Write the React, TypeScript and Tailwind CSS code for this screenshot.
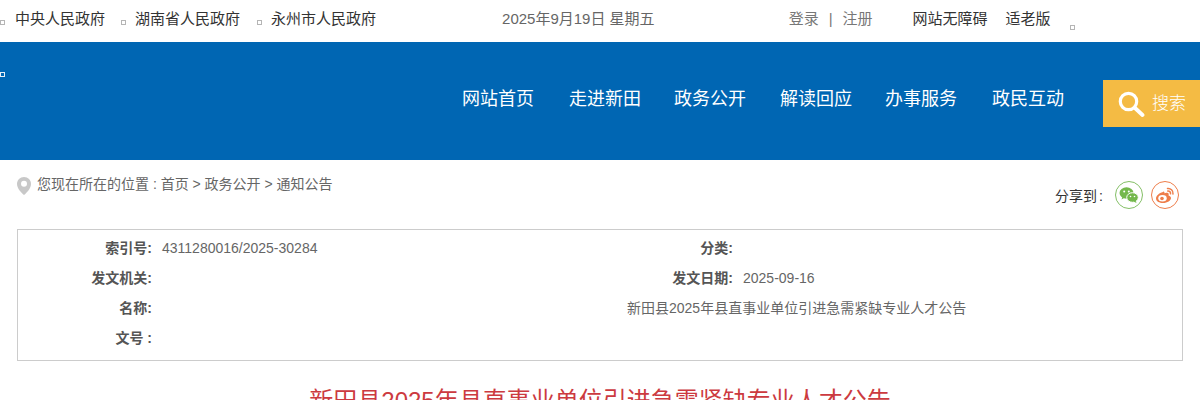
const font = '"Liberation Sans","Noto Sans CJK SC",sans-serif';

function Sq({ className = "bg-white" }: { className?: string }) {
  return <span className={"block w-[5px] h-[5px] border border-[#b5b5b5] shrink-0 " + className} />;
}

function Row({ label, value, label2, value2 }: { label: string; value?: string; label2?: string; value2?: string }) {
  return (
    <div className="flex h-[30px] items-center text-[14px] leading-[30px]">
      <div className="w-[134px] text-right font-bold text-[#555]">{label}</div>
      <div className="w-[476px] pl-[10px] text-[#666]">{value}</div>
      <div className="w-[105px] text-right font-bold text-[#555]">{label2}</div>
      <div className="flex-1 pl-[10px] text-[#666]">{value2}</div>
    </div>
  );
}

export default function App() {
  return (
    <div className="w-[1200px] h-[400px] overflow-hidden bg-white" style={{ fontFamily: font }}>
      {/* top bar */}
      <div className="h-[42px] flex items-start text-[15px] leading-[38px] text-[#333]">
        <Sq className="mt-[20px]" />
        <span className="ml-[10px]">中央人民政府</span>
        <Sq className="mt-[20px] ml-[16px]" />
        <span className="ml-[9px]">湖南省人民政府</span>
        <Sq className="mt-[20px] ml-[17px]" />
        <span className="ml-[9px]">永州市人民政府</span>
        <span className="ml-[126px] text-[#666]">2025年9月19日 星期五</span>
        <span className="ml-[134px] text-[#777]">登录</span>
        <span className="ml-[10px] text-[#777]">|</span>
        <span className="ml-[10px] text-[#777]">注册</span>
        <span className="ml-[40px]">网站无障碍</span>
        <span className="ml-[18px]">适老版</span>
        <Sq className="mt-[25px] ml-[19px]" />
      </div>
      {/* header */}
      <div className="h-[118px] bg-[#0066b3] flex items-start relative">
        <span className="block w-[5px] h-[5px] mt-[30px] border border-[#e6eef6] shrink-0" />
        <nav className="flex ml-[457px] mt-[43px] text-[18px] leading-[28px] text-white">
          <span>网站首页</span>
          <span className="ml-[35px]">走进新田</span>
          <span className="ml-[33px]">政务公开</span>
          <span className="ml-[34px]">解读回应</span>
          <span className="ml-[33px]">办事服务</span>
          <span className="ml-[35px]">政民互动</span>
        </nav>
        <div className="ml-auto mt-[38px] w-[97px] h-[47px] bg-[#f4bb44] flex items-center text-white text-[17px]">
          <svg className="ml-[14px]" width="28" height="28" viewBox="0 0 28 28" fill="none" stroke="#fff" strokeLinecap="round">
            <circle cx="11.5" cy="11.5" r="8.2" strokeWidth="3.2" />
            <path d="M18 18l7.5 7" strokeWidth="3.8" />
          </svg>
          <span className="ml-[7px] font-light">搜索</span>
        </div>
      </div>
      {/* breadcrumb */}
      <div className="h-[69px] flex items-start">
        <svg className="ml-[17px] mt-[17px]" width="14" height="18" viewBox="0 0 14 18">
          <path d="M7 0C3 0 0 3 0 7c0 4.5 4.5 9 7 11 2.500-2 7-6.500 7-11 0-4-3-7-7-7z" fill="#c8c8c8" />
          <circle cx="7" cy="6.800" r="3" fill="#fff" />
        </svg>
        <span className="ml-[6px] mt-[14px] text-[14px] leading-[20px] text-[#666]">您现在所在的位置 : 首页 &gt; 政务公开 &gt; 通知公告</span>
        <span className="ml-auto mt-[26px] text-[14px] leading-[20px] text-[#333]">分享到<span className="ml-[2px]">:</span></span>
        <span className="ml-[12px] mt-[21px] w-[28px] h-[28px] rounded-full border border-[#84bf66] flex items-center justify-center">
          <svg width="20" height="17" viewBox="0 0 20 17" fill="#74b84c">
            <ellipse cx="7.500" cy="6" rx="7" ry="5.800" />
            <path d="M3.500 9.500l-1 3 3.500-2z" />
            <ellipse cx="13.500" cy="10.500" rx="5.800" ry="4.800" stroke="#fff" strokeWidth="1" />
            <path d="M16.500 13.500l1 2.500-3-1.500z" />
            <circle cx="5.200" cy="4.500" r="1" fill="#fff" />
            <circle cx="9.800" cy="4.500" r="1" fill="#fff" />
            <circle cx="11.500" cy="9.500" r=".8" fill="#fff" />
            <circle cx="15.500" cy="9.500" r=".8" fill="#fff" />
          </svg>
        </span>
        <span className="ml-[8px] mr-[21px] mt-[21px] w-[28px] h-[28px] rounded-full border border-[#ee7d4a] flex items-center justify-center">
          <svg width="20" height="17" viewBox="0 0 20 17" fill="none">
            <path d="M8 5C4 6 1 9 1 11.500 1 14.500 4.500 16 8 16c4.500 0 8-2.500 8-5 0-1.800-1.800-2.300-2.500-2.500.5-1.500.2-2.700-1.500-2.800-1 0-2.500.5-2.500.5s.3-1.700-1.500-1.700z" fill="#ee7d4a" />
            <ellipse cx="7.500" cy="11.300" rx="4.200" ry="3.200" fill="#fff" />
            <circle cx="7" cy="11.500" r="1.800" fill="#ee7d4a" />
            <path d="M12.500 1.500c3-.5 6 2 5.500 5.500M12.800 4c1.500-.3 3 1 2.700 2.800" stroke="#ee7d4a" strokeWidth="1.500" strokeLinecap="round" />
          </svg>
        </span>
      </div>
      {/* info */}
      <div className="mx-[17px] h-[132px] border border-[#cccccc] py-[3px]">
        <Row label="索引号:" value="4311280016/2025-30284" label2="分类:" />
        <Row label="发文机关:" label2="发文日期:" value2="2025-09-16" />
        <div className="flex h-[30px] items-center text-[14px] leading-[30px]">
          <div className="w-[134px] text-right font-bold text-[#555]">名称:</div>
          <div className="flex-1 pl-[475px] text-[#666]">新田县2025年县直事业单位引进急需紧缺专业人才公告</div>
        </div>
        <Row label="文号 :" />
      </div>
      <h1 className="mt-[25px] text-center text-[24px] leading-[30px] font-normal text-[#cc3a40]">
        新田县2025年县直事业单位引进急需紧缺专业人才公告
      </h1>
    </div>
  );
}
